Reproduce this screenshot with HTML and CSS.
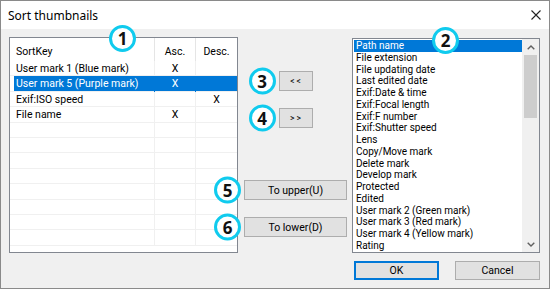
FILE: index.html
```html
<!DOCTYPE html>
<html lang="en">
<head>
  <meta charset="UTF-8">
  <title>Sort thumbnails</title>
  <link rel="stylesheet" href="styles.css">
</head>
<body>
  <div class="window">
    <div class="titlebar">
      <span class="title">Sort thumbnails</span>
      <svg class="close" width="10" height="10" viewBox="0 0 10 10">
        <path d="M0.5 0.5 L9.5 9.5 M9.5 0.5 L0.5 9.5" stroke="#222" stroke-width="1.1" fill="none"/>
      </svg>
    </div>

    <div class="content">
      <div class="keys">
        <span class="badge badge-keys">1</span>
        <div class="keys-head">
          <div class="cell col-key">SortKey</div>
          <div class="cell col-asc">Asc.</div>
          <div class="cell col-desc">Desc.</div>
        </div>
        <div class="keys-body" id="keyRows"></div>
      </div>

      <div class="middle">
        <div class="btn-wrap">
          <span class="badge badge-side">3</span>
          <button class="btn btn-small">&lt; &lt;</button>
        </div>
        <div class="btn-wrap gap-small">
          <span class="badge badge-side">4</span>
          <button class="btn btn-small">&gt; &gt;</button>
        </div>
        <div class="btn-wrap gap-large">
          <span class="badge badge-side">5</span>
          <button class="btn btn-wide">To upper(U)</button>
        </div>
        <div class="btn-wrap gap-small">
          <span class="badge badge-side">6</span>
          <button class="btn btn-wide">To lower(D)</button>
        </div>
      </div>

      <div class="side">
        <div class="fields">
          <span class="badge badge-fields">2</span>
          <div class="field-items" id="fieldList"></div>
          <div class="scrollbar">
            <div class="arrow">
              <svg width="8" height="5" viewBox="0 0 8 5"><path d="M0.7 4.3 L4 1 L7.3 4.3" stroke="#606060" stroke-width="1.4" fill="none"/></svg>
            </div>
            <div class="thumb"></div>
            <div class="track"></div>
            <div class="arrow">
              <svg width="8" height="5" viewBox="0 0 8 5"><path d="M0.7 0.7 L4 4 L7.3 0.7" stroke="#606060" stroke-width="1.4" fill="none"/></svg>
            </div>
          </div>
        </div>
        <div class="actions">
          <button class="btn btn-action default">OK</button>
          <button class="btn btn-action">Cancel</button>
        </div>
      </div>
    </div>
  </div>

  <script>
    const sortKeys = [
      { name: 'User mark 1 (Blue mark)', asc: true },
      { name: 'User mark 5 (Purple mark)', asc: true, selected: true },
      { name: 'Exif:ISO speed', asc: false },
      { name: 'File name', asc: true }
    ];

    const fields = [
      'Path name', 'File extension', 'File updating date', 'Last edited date',
      'Exif:Date & time', 'Exif:Focal length', 'Exif:F number', 'Exif:Shutter speed',
      'Lens', 'Copy/Move mark', 'Delete mark', 'Develop mark', 'Protected', 'Edited',
      'User mark 2 (Green mark)', 'User mark 3 (Red mark)', 'User mark 4 (Yellow mark)', 'Rating'
    ];

    const keyRows = document.getElementById('keyRows');
    for (let i = 0; i < 12; i++) {
      const key = sortKeys[i];
      const row = document.createElement('div');
      row.className = 'key-row' + (key && key.selected ? ' selected' : '');
      row.innerHTML = `
        <div class="cell col-key">${key ? key.name : ''}</div>
        <div class="cell col-asc">${key && key.asc ? 'X' : ''}</div>
        <div class="cell col-desc">${key && !key.asc ? 'X' : ''}</div>
      `;
      keyRows.appendChild(row);
    }

    const fieldList = document.getElementById('fieldList');
    fields.forEach((name, index) => {
      const item = document.createElement('div');
      item.className = 'field-item' + (index === 0 ? ' selected' : '');
      item.textContent = name;
      fieldList.appendChild(item);
    });
  </script>
</body>
</html>
```

FILE: styles.css
```css
* {
  box-sizing: border-box;
}

body {
  margin: 0;
  font-family: Roboto, "Noto Sans", Arial, sans-serif;
  font-size: 10.5px;
  color: #000;
  background: #fff;
}

.window {
  width: 550px;
  height: 289px;
  border: 1px solid #8a8a8a;
  background: #f0f0f0;
  display: flex;
  flex-direction: column;
}

.titlebar {
  height: 28px;
  background: #fff;
  display: flex;
  align-items: center;
  justify-content: space-between;
  padding: 0 8px 0 7px;
}

.title {
  font-family: "Noto Sans", Arial, sans-serif;
  font-size: 12px;
}

.close {
  margin-top: -1px;
}

.content {
  display: flex;
  padding: 8px 9px 0 8px;
}

/* sort key list */
.keys {
  position: relative;
  width: 229px;
  height: 216px;
  border: 1px solid #828790;
  background: #fff;
}

.keys-head {
  display: flex;
  height: 23px;
  align-items: center;
}

.keys-head .cell {
  height: 100%;
  display: flex;
  align-items: center;
  justify-content: center;
  padding-top: 4px;
  border-right: 1px solid #e5e5e5;
}

.keys-head .col-key {
  justify-content: flex-start;
  padding-left: 6px;
}

.keys-head .col-desc {
  border-right: none;
}

.key-row {
  display: flex;
  height: 15.4px;
  padding-left: 4px;
  background-clip: content-box;
  box-shadow: inset 0 -1px 0 #f0f0f0;
}

.key-row .cell {
  line-height: 15px;
  border-right: 1px solid #f0f0f0;
  white-space: nowrap;
  overflow: hidden;
}

.key-row .col-key {
  width: 141px;
  padding-left: 2px;
}

.col-key {
  width: 145px;
}

.col-asc,
.col-desc {
  width: 41px;
  text-align: center;
}

.key-row .col-desc {
  border-right: none;
}

.key-row.selected {
  background-color: #0078d7;
  color: #fff;
}

.key-row.selected .cell {
  border-right-color: #0078d7;
}

/* middle buttons */
.middle {
  width: 103px;
  margin-left: 6px;
  margin-right: 5px;
  padding-top: 34px;
  display: flex;
  flex-direction: column;
  align-items: center;
}

.btn-wrap {
  position: relative;
  display: flex;
}

.gap-small {
  margin-top: 17px;
}

.gap-large {
  margin-top: 52px;
}

.btn {
  font-family: Roboto, "Noto Sans", Arial, sans-serif;
  font-size: 10.5px;
  color: #000;
  background: #e1e1e1;
  border: 1px solid #adadad;
  padding: 0;
  height: 20px;
}

.btn-small {
  width: 34px;
  font-size: 8.5px;
}

.btn-wide {
  width: 103px;
}

/* numbered callouts */
.badge {
  position: absolute;
  width: 27px;
  height: 27px;
  border: 3px solid #10cbee;
  border-radius: 50%;
  background: #fff;
  display: flex;
  align-items: center;
  justify-content: center;
  font-family: "Noto Sans", Arial, sans-serif;
  font-size: 17px;
  font-weight: bold;
  color: #111;
  z-index: 2;
}

.badge-side {
  right: calc(100% + 3px);
  top: 50%;
  transform: translateY(-50%);
}

.badge-keys {
  left: 99px;
  top: -13px;
}

.badge-fields {
  left: 79px;
  top: -12px;
}

/* field list */
.side {
  width: 188px;
  display: flex;
  flex-direction: column;
}

.fields {
  position: relative;
  margin-top: 1px;
  height: 215px;
  border: 1px solid #828790;
  background: #fff;
  display: flex;
}

.field-items {
  flex: 1;
  padding: 1px 0 0 1px;
  overflow: hidden;
}

.field-item {
  height: 11.75px;
  line-height: 11.75px;
  padding-left: 2px;
  font-size: 10px;
  white-space: nowrap;
}

.field-item.selected {
  background: #0078d7;
  color: #fff;
}

.scrollbar {
  width: 17px;
  background: #f0f0f0;
  display: flex;
  flex-direction: column;
  align-items: center;
}

.arrow {
  height: 16px;
  width: 100%;
  display: flex;
  align-items: center;
  justify-content: center;
}

.thumb {
  width: 13px;
  height: 63px;
  background: #cdcdcd;
}

.track {
  flex: 1;
}

.actions {
  display: flex;
  justify-content: space-between;
  padding-left: 2px;
  margin-top: 8px;
}

.btn-action {
  width: 85px;
  height: 19px;
}

.btn-action.default {
  border: 2px solid #0078d7;
}
```
